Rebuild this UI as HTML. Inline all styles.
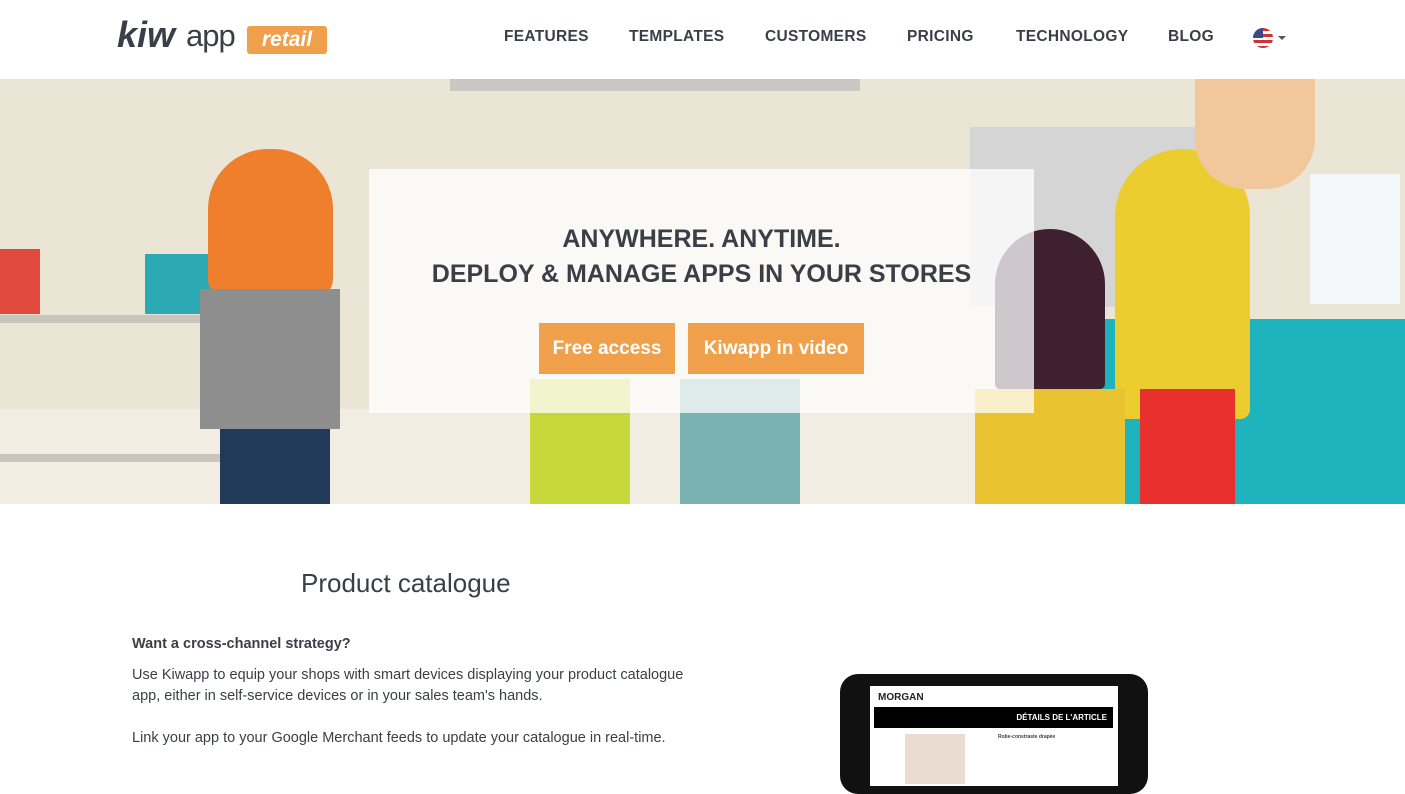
<!DOCTYPE html>
<html><head><meta charset="utf-8"><style>
*{margin:0;padding:0;box-sizing:border-box}
body{width:1405px;height:778px;overflow:hidden;background:#fff;font-family:"Liberation Sans",sans-serif;color:#3a3f47;position:relative}
.abs{position:absolute}
nav a{position:absolute;top:28px;font-weight:bold;font-size:15.5px;color:#3a3f47;letter-spacing:.3px}
.hero{position:absolute;left:0;top:79px;width:1405px;height:425px;background:#ebe5d5;overflow:hidden}
.btn{position:absolute;top:323px;height:51px;background:#f0a04b;color:#fff;font-size:19px;font-weight:bold;text-align:center;line-height:51px}
</style></head><body>
<div class="abs" style="left:117px;top:14px;font-size:36px;font-weight:900;font-style:italic;color:#3a3f47;letter-spacing:0px">kiw</div>
<div class="abs" style="left:186px;top:18px;font-size:31px;color:#3a3f47;letter-spacing:-1px">app</div>
<div class="abs" style="left:247px;top:26px;width:80px;height:28px;background:#f0a04b;border-radius:3px;color:#fff;font-weight:bold;font-style:italic;font-size:21px;text-align:center;line-height:28px">retail</div>
<nav>
<a style="left:504px">FEATURES</a><a style="left:629px">TEMPLATES</a><a style="left:765px">CUSTOMERS</a><a style="left:907px">PRICING</a><a style="left:1016px">TECHNOLOGY</a><a style="left:1168px">BLOG</a>
</nav>
<div class="abs" style="left:1253px;top:28px;width:20px;height:20px;border-radius:50%;overflow:hidden;background:repeating-linear-gradient(#c33 0 3px,#fff 3px 6px)"><div style="width:10px;height:10px;background:#3c4a8a"></div></div>
<div class="abs" style="left:1278px;top:36px;border:4px solid transparent;border-top-color:#555"></div>
<div class="hero">
<div class="abs" style="left:0;top:330px;width:1405px;height:95px;background:#f1ede3"></div>
<div class="abs" style="left:0;top:236px;width:240px;height:8px;background:#c9c5bd"></div>
<div class="abs" style="left:0;top:375px;width:240px;height:8px;background:#c9c5bd"></div>
<div class="abs" style="left:0;top:170px;width:40px;height:65px;background:#e04a3e"></div>
<div class="abs" style="left:145px;top:175px;width:80px;height:60px;background:#2aa9b3"></div>
<div class="abs" style="left:450px;top:0;width:410px;height:12px;background:#c9c7c3"></div>
<div class="abs" style="left:970px;top:48px;width:240px;height:180px;background:#d6d5d6"></div>
<div class="abs" style="left:1000px;top:240px;width:405px;height:185px;background:#1fb3bd"></div>
<div class="abs" style="left:208px;top:70px;width:125px;height:150px;background:#ef7f2d;border-radius:60px 60px 20px 20px"></div>
<div class="abs" style="left:200px;top:210px;width:140px;height:140px;background:#8f8e8e"></div>
<div class="abs" style="left:220px;top:350px;width:110px;height:75px;background:#213a5a"></div>
<div class="abs" style="left:1115px;top:70px;width:135px;height:270px;background:#eccd2f;border-radius:70px 70px 10px 10px"></div>
<div class="abs" style="left:1140px;top:310px;width:95px;height:115px;background:#e8302c"></div>
<div class="abs" style="left:995px;top:150px;width:110px;height:160px;background:#3e2030;border-radius:55px 55px 5px 5px"></div>
<div class="abs" style="left:975px;top:310px;width:150px;height:115px;background:#e8c230"></div>
<div class="abs" style="left:1195px;top:0;width:120px;height:110px;background:#f2c79c;border-radius:0 0 50px 50px"></div>
<div class="abs" style="left:1310px;top:95px;width:90px;height:130px;background:#f3f7f8"></div>
<div class="abs" style="left:530px;top:300px;width:100px;height:125px;background:#c8d83a"></div>
<div class="abs" style="left:680px;top:300px;width:120px;height:125px;background:#7ab2b1"></div>
<div class="abs" style="left:369px;top:90px;width:665px;height:244px;background:rgba(255,255,255,.75)"></div>
<div class="abs" style="left:369px;top:143px;width:665px;text-align:center;font-size:25px;font-weight:bold;color:#3a3f47;line-height:35px">ANYWHERE. ANYTIME.<br>DEPLOY &amp; MANAGE APPS IN YOUR STORES</div>
</div>
<div class="btn" style="left:539px;width:136px">Free access</div>
<div class="btn" style="left:688px;width:176px">Kiwapp in video</div>
<div class="abs" style="left:301px;top:568px;font-size:26px;color:#3a3f47">Product catalogue</div>
<div class="abs" style="left:132px;top:636px;font-size:14.5px;font-weight:bold">Want a cross-channel strategy?</div>
<div class="abs" style="left:132px;top:665px;font-size:14.5px;line-height:21px;width:570px">Use Kiwapp to equip your shops with smart devices displaying your product catalogue app, either in self-service devices or in your sales team's hands.</div>
<div class="abs" style="left:132px;top:728px;font-size:14.5px;line-height:21px">Link your app to your Google Merchant feeds to update your catalogue in real-time.</div>
<div class="abs" style="left:840px;top:674px;width:308px;height:120px;background:#111;border-radius:18px"></div>
<div class="abs" style="left:870px;top:686px;width:248px;height:100px;background:#fff"></div>
<div class="abs" style="left:878px;top:692px;font-size:10px;font-weight:bold;color:#222">MORGAN</div>
<div class="abs" style="left:874px;top:707px;width:239px;height:21px;background:#000;color:#fff;font-size:8px;font-weight:bold;text-align:right;padding:6px 6px 0 0">DÉTAILS DE L'ARTICLE</div>
<div class="abs" style="left:905px;top:734px;width:60px;height:50px;background:#eadcd0"></div>
<div class="abs" style="left:998px;top:734px;font-size:5px;font-weight:bold">Robe-constraste drapée</div>
</body></html>
